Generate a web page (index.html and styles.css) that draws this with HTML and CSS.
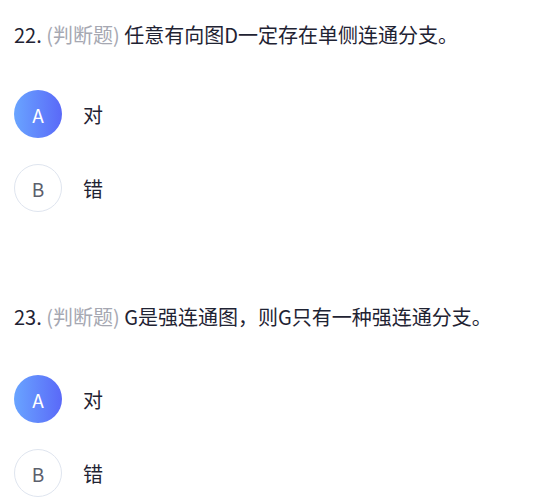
FILE: index.html
```html
<!DOCTYPE html>
<html lang="zh-CN">
<head>
<meta charset="utf-8">
<link rel="stylesheet" href="styles.css">
</head>
<body>
<div class="page">
  <section class="question q1">
    <div class="title"><span class="num">22.</span> <span class="type">(判断题)</span> 任意有向图D一定存在单侧连通分支。</div>
    <div class="options">
      <div class="option selected"><span class="badge">A</span><span class="label">对</span></div>
      <div class="option"><span class="badge">B</span><span class="label">错</span></div>
    </div>
  </section>
  <section class="question q2">
    <div class="title"><span class="num">23.</span> <span class="type">(判断题)</span> G是强连通图，则G只有一种强连通分支。</div>
    <div class="options">
      <div class="option selected"><span class="badge">A</span><span class="label">对</span></div>
      <div class="option"><span class="badge">B</span><span class="label">错</span></div>
    </div>
  </section>
</div>
</body>
</html>
```
FILE: styles.css
```css
html, body {
  margin: 0;
  padding: 0;
  background: #ffffff;
}
body {
  font-family: "Noto Sans CJK SC", "Noto Sans", sans-serif;
  color: #1f2333;
}
.page {
  padding: 21px 14px 0 14px;
}
.question {
  display: flex;
  flex-direction: column;
}
.q2 {
  margin-top: 91px;
}
.title {
  font-size: 20px;
  line-height: 28px;
  white-space: nowrap;
}
.type {
  color: #a6a8b2;
}
.options {
  display: flex;
  flex-direction: column;
  gap: 26px;
  margin-top: 41px;
}
.q2 .options {
  margin-top: 44px;
}
.option {
  display: flex;
  align-items: center;
  gap: 21px;
}
.badge {
  box-sizing: border-box;
  width: 48px;
  height: 48px;
  border-radius: 50%;
  border: 1px solid #dfe5ef;
  display: flex;
  align-items: center;
  justify-content: center;
  font-size: 19px;
  color: #5c606c;
  background: #ffffff;
}
.selected .badge {
  border: none;
  color: #ffffff;
  background: linear-gradient(90deg, #69a4ff 0%, #5a69f8 100%);
}
.label {
  font-size: 20px;
  color: #1f2333;
}
```
